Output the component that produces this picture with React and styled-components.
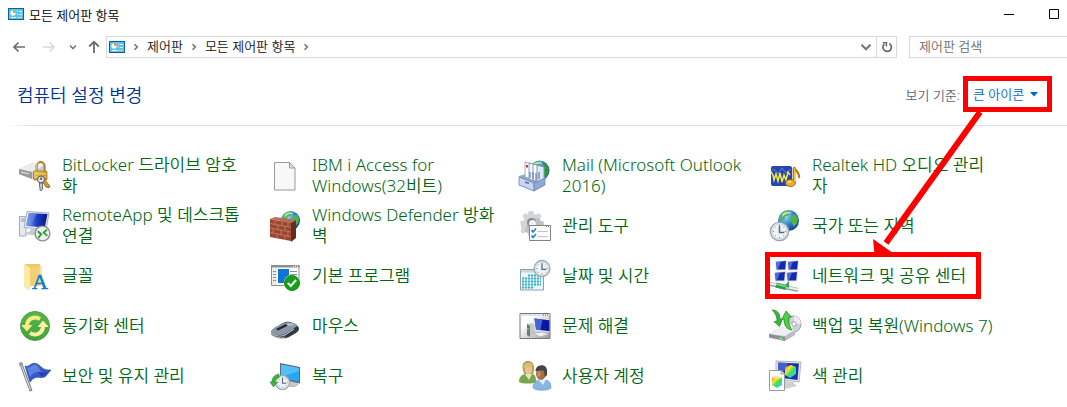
import React from "react";
import styled, { createGlobalStyle } from "styled-components";

const GlobalStyle = createGlobalStyle`
    *, *::before, *::after {
        box-sizing: border-box;
    }
    body {
        margin: 0;
        background: #fff;
        overflow: hidden;
        font-family: "Noto Sans", "Noto Sans CJK KR", sans-serif;
        font-size: 13px;
        color: #111;
    }
    button, input, select {
        font-family: inherit;
        font-size: inherit;
        color: inherit;
        border: 0;
        padding: 0;
        margin: 0;
        background: none;
    }
`;

/* ---------- small icons ---------- */

const PanelIcon = () => (
    <svg width="16" height="12" viewBox="0 0 16 12" aria-hidden="true">
        <rect width="16" height="12" fill="#0e6098" />
        <rect x="1" y="1" width="14" height="10" fill="#58c1f5" />
        <circle cx="5" cy="5" r="2.6" fill="#fff" />
        <path d="M5 5V2.2A2.8 2.8 0 0 1 7.8 5z" fill="#f09c1c" />
        <path d="M9 3h1M9 6h1M3 9.5h5" stroke="#fff" />
        <path d="M11 3.5h3M11 6.5h3" stroke="#e6f7ff" />
        <path d="M9 9.5h5" stroke="#f7d35c" />
    </svg>
);

const BackIcon = () => (
    <svg width="14" height="12" viewBox="0 0 14 12" aria-hidden="true">
        <path d="M13 6H2M6.5 1.500L2 6l4.500 4.500" fill="none" stroke="#6c6c6c" strokeWidth="1.700" />
    </svg>
);

const ForwardIcon = () => (
    <svg width="14" height="12" viewBox="0 0 14 12" aria-hidden="true">
        <path d="M1 6h11M7.500 1.500L12 6l-4.500 4.500" fill="none" stroke="#d9d9d9" strokeWidth="1.500" />
    </svg>
);

const UpIcon = () => (
    <svg width="12" height="14" viewBox="0 0 12 14" aria-hidden="true">
        <path d="M6 13V2M1.200 6.500L6 1.800l4.800 4.700" fill="none" stroke="#6c6c6c" strokeWidth="1.800" />
    </svg>
);

const DownIcon = ({ size = 8, weight = 1.6 }) => (
    <svg width={size} height={size} viewBox="0 0 8 8" aria-hidden="true">
        <path d="M1 2.500l3 3 3-3" fill="none" stroke="#777" strokeWidth={weight} />
    </svg>
);

const ChevronIcon = () => (
    <svg width="6" height="8" viewBox="0 0 6 8" aria-hidden="true">
        <path d="M1.500 1.200L4.300 4 1.500 6.800" fill="none" stroke="#777" strokeWidth="1.600" />
    </svg>
);

const RefreshIcon = () => (
    <svg width="12" height="12" viewBox="0 0 12 12" aria-hidden="true">
        <path d="M8.300 2.600A4.200 4.200 0 1 1 3.200 3.200" fill="none" stroke="#666" strokeWidth="1.700" />
        <path d="M1.800 1.700h3.600v3.700" fill="none" stroke="#666" strokeWidth="1.500" />
    </svg>
);

/* ---------- applet icons, all on a 32 grid ---------- */

const Globe = ({ cx, cy, r }) => (
    <g transform={`translate(${cx} ${cy}) scale(${r / 10})`}>
        <circle r="10" fill="url(#globe)" />
        <path d="M-7-6C-4-10 1-10 2-8L0-5l-3 1-1 3-4 1zM3-5l4-1 2 4-1 5-3 3-2-4-2-2zM-6 2l4 1 1 3-2 3C-6 7-7 5-6 2z" fill="#4fb548" />
        <path d="M-6-6C-4-9 2-9 3-7-1-7-4-6-6-3z" fill="#fff" opacity=".6" />
    </g>
);

const Clock = ({ cx, cy, r }) => (
    <g transform={`translate(${cx} ${cy}) scale(${r / 10})`}>
        <circle r="9.400" fill="#eef3f7" stroke="#9ba5ad" strokeWidth="1.500" />
        <circle r="7.600" fill="none" stroke="#c3ccd4" strokeWidth=".8" />
        <path d="M0-7v1.500M0 5.500V7M-7 0h1.500M5.500 0H7M-5-5l1 1M5-5l-1 1M-5 5l1-1M5 5L4 4" stroke="#8b949c" />
        <path d="M0-6V1h5" fill="none" stroke="#56687a" strokeWidth="1.500" />
    </g>
);

const ICONS = {
    bitlocker: (
        <>
            <path d="M0 10l13-6 11 3v8l-11 5L0 15z" fill="#c9cbce" />
            <path d="M0 10l13-6 11 3-11 6z" fill="#ececee" />
            <path d="M0 10l13 3v7L0 15z" fill="#96999d" />
            <path d="M2 13l8 2" stroke="#e8e8e8" />
            <path d="M17.500 14V7.500a4 4.500 0 0 1 8 0V14" fill="none" stroke="#a98a48" strokeWidth="2.400" />
            <path d="M17 13V7a4.500 5 0 0 1 3-4.500" fill="none" stroke="#e9d9a3" strokeWidth="1" />
            <rect x="14.500" y="12" width="13.500" height="9" rx="1" fill="url(#gold)" stroke="#9a6b13" strokeWidth=".7" />
            <path d="M15 15h12.500M15 18h12.500" stroke="#f8df8b" strokeWidth=".8" />
            <path d="M25 20l6 7-1 2-3-1-4-6z" fill="#c99a31" stroke="#7d5a12" strokeWidth=".7" />
            <circle cx="22" cy="20.500" r="3.500" fill="#e3e3e3" stroke="#555" strokeWidth="1" />
            <circle cx="22" cy="19.800" r="1.200" fill="#666" />
            <path d="M20.500 24h3v6l-1.500 2-1.500-2 1-1-1-1z" fill="#c4c4c4" stroke="#555" strokeWidth=".8" />
        </>
    ),
    remote: (
        <>
            <path d="M.5 7.500H7V27H.5z" fill="#e7ebf0" stroke="#a2abb5" />
            <path d="M2 10h4M2 12h4" stroke="#8c97a3" />
            <path d="M8 2.500l22 1.500-3 16.500-22-2z" fill="#eef1f5" stroke="#a4adb8" />
            <path d="M9.500 4L28.500 5l-2.700 13.500L6.800 17z" fill="url(#screen)" />
            <path d="M10 4l8 .5-7 12.500-4-.3z" fill="#6c8fe8" opacity=".55" />
            <path d="M12 19l7 1-1 3 3 4-17-2 7-3z" fill="#c6ccd4" />
            <circle cx="23.500" cy="24.500" r="7.400" fill="#ededed" stroke="#8b8f93" strokeWidth="1.400" />
            <path d="M18.800 22.200l3.500 3-3 3.600M28 20.600l-3.300 3 3.600 3.200" fill="none" stroke="#2e9b2e" strokeWidth="1.800" />
        </>
    ),
    fonts: (
        <>
            <path d="M6 5h15v22H10z" fill="#f2cf72" />
            <path d="M6 5h15v3H10z" fill="#e9c15a" opacity=".5" />
            <path d="M5 5l6 4v23l-6-4z" fill="#ffe9a8" />
            <path d="M19 7h4v20h-4z" fill="#f6d985" opacity=".7" />
            <text x="13" y="30" fontFamily="Liberation Serif, serif" fontSize="22" fontWeight="400" fill="#0c7dc6" stroke="#0c7dc6" strokeWidth=".6">A</text>
        </>
    ),
    sync: (
        <>
            <circle cx="16" cy="17" r="14.500" fill="url(#green)" stroke="#4f9c45" />
            <path d="M6 16A10 10 0 0 1 22 8.500l-2 3.200A6.300 6.300 0 0 0 10 16h3.500L8 22.500 2.200 16z" fill="#f8ec86" />
            <path d="M26 18A10 10 0 0 1 10 25.500l2-3.200A6.300 6.300 0 0 0 22 18h-3.500L24 11.500 29.800 18z" fill="#fdf2a1" />
        </>
    ),
    flag: (
        <>
            <path d="M6 7C10 9 12 3 17 4.500S23 12 32 11c-4 4-5 8-10 7.500S15 18 11 23z" fill="url(#blue)" stroke="#27479c" strokeWidth=".7" />
            <path d="M8 9c4 0 6-4 9-3s3 5 6 7c-5 0-8-1-12 5z" fill="#7ea2ec" opacity=".55" />
            <path d="M19 12c3 2 8 2 11 0-3 3-4 5-8 5z" fill="#1c2f9c" opacity=".6" />
            <path d="M2 5l10 27" stroke="#747981" strokeWidth="3" />
            <path d="M2 5l9.500 26" stroke="#d9dce0" strokeWidth="1.200" />
            <circle cx="2" cy="5" r="2" fill="#9b9fa5" />
        </>
    ),
    page: (
        <>
            <path d="M5.500 3.500h15l5.500 5.500v22H5.500z" fill="#f7f8f9" stroke="#9a9a9a" />
            <path d="M20.500 3.500V9H26z" fill="#dfe2e4" stroke="#9a9a9a" />
        </>
    ),
    firewall: (
        <>
            <Globe cx={21.500} cy={11.500} r={9.500} />
            <path d="M22 14l5-3v18l-5 4z" fill="#6c2a1c" />
            <path d="M1 10l21 4v18L1 28z" fill="#9c4531" />
            <path d="M1 10l5-2 21 3-5 3z" fill="#bb6c55" />
            <path d="M1 14.500l21 3.800M1 19l21 4M1 23.500l21 4.200M6 11v4.500M13 12v4.700M19 13.500v4.500M9 16v4.500M16 17.200V22M4 19.500V24M12 21v4.700M19 22.500v4.700M8 25v4.500M16 26.500V31" stroke="#c98d7a" strokeWidth=".7" />
        </>
    ),
    programs: (
        <>
            <path d="M2.500 6.500h27.500V26.500H2.500z" fill="#fff" stroke="#8d8d8d" />
            <path d="M2 6h28.500v2.500H2z" fill="#8d8d8d" />
            <path d="M24 7.200h1M26 7.200h1M28 7.200h1" stroke="#fff" />
            <path d="M3 9h5v17H3z" fill="#ececec" />
            <path d="M4 12.500h3M4 15.500h3M4 18.500h3M4 21.500h3M21 12.500h7M21 15.500h7" stroke="#8f8f8f" />
            <path d="M9 10h11v14H9z" fill="#0f76d8" />
            <circle cx="23" cy="24" r="8.300" fill="#fff" />
            <circle cx="23" cy="24" r="7.600" fill="#16a016" stroke="#0a7a0a" strokeWidth=".8" />
            <path d="M18.800 24l3 3 5.300-6" fill="none" stroke="#fff" strokeWidth="2" />
        </>
    ),
    mouse: (
        <>
            <path d="M2 24c0-3 6-7 12-10 4-2 7-1.500 10 0s6 3 6 6-5 5-9 7.500-8 2-13 .5S2 26 2 24z" fill="#34373c" />
            <path d="M2 23c0-3 6-6 12-8.500 4-2 7-1.500 10-.5 4 1 6 2.500 2 4.500L16 25c-4 2-14 1-14-2z" fill="#8997a8" />
            <path d="M2 24c3 3 10 4 14 2l9-6" fill="none" stroke="#d7dbe0" />
            <path d="M7 20l10-5 2 1.500-10 5z" fill="#23262b" />
            <path d="M17 15l5-1 4 2-7 1z" fill="#b5c1cf" />
            <path d="M4 27c4 2 8 3 12 1" fill="none" stroke="#b7bbc0" />
        </>
    ),
    recovery: (
        <>
            <ellipse cx="23" cy="25" rx="6" ry="2.500" fill="#c4cad0" stroke="#98a1aa" strokeWidth=".7" />
            <path d="M11 4l20 4v16.500l-20-5z" fill="#5f6a75" />
            <path d="M12 5.500L30 9v13.800L12 18.500z" fill="#27a7ef" />
            <path d="M12 5.500L30 9v3L12 18z" fill="#6ac8f9" opacity=".7" />
            <Clock cx={13.500} cy={23.500} r={7.500} />
            <path d="M10 15c-5 1-7 4-7 8H1l3.500 5 4-4.500H6c0-3 1-4.500 4-5z" fill="#3db43d" stroke="#26852a" strokeWidth=".6" />
        </>
    ),
    mail: (
        <>
            <Globe cx={20.500} cy={11.500} r={10} />
            <path d="M23 3c6 2 8 8 6 13l-3 4V8z" fill="#2f9440" />
            <path d="M0 17l7-2 16 4 3-2v8l-11 7L0 26z" fill="#93a9cf" />
            <path d="M6 3l8 2v16l-8-3z" fill="#fff" stroke="#8c9ab5" strokeWidth=".8" />
            <path d="M10 4l8 2v17l-8-3z" fill="#f4f7fc" stroke="#7a8bab" strokeWidth=".8" />
            <path d="M14 5l7 2v16l-7-2z" fill="#fff" stroke="#7a8bab" strokeWidth=".8" />
            <path d="M18 6l7 2v13l-7 2z" fill="#dce7f7" stroke="#6b7ea5" strokeWidth=".8" />
            <path d="M7 6h2v2.500H7z" fill="#e03020" />
            <path d="M11 13v6M14 13v7M17 14v7M20 13v7" stroke="#4d66a0" />
            <path d="M0 18l15 6v8L0 26z" fill="#c8d6ef" stroke="#6f87b6" strokeWidth=".8" />
            <path d="M15 24l11-5v7l-11 6z" fill="#8fa8d6" stroke="#6f87b6" strokeWidth=".8" />
            <path d="M6 23l4 1.500" stroke="#5d76aa" strokeWidth="1.600" />
        </>
    ),
    tools: (
        <>
            <path d="M10 2h4l.6 3 2.400 1 2.600-1.700L22.500 7l-1.700 2.600 1 2.400 3 .6v4l-3 .6-1 2.400L22 22l-3 3-2.500-2-2.400 1-.6 3h-4L9 24l-2.500-1L4 24.500 1.500 22 3 19.500 2 17l-.5-4.500 3-.6 1-2.400L3.500 7 6.500 4.300 9 6z" fill="#bcc1c5" />
            <path d="M10 2h4l.6 3 2.400 1 2.600-1.700L22.500 7l-1.700 2.600C12 6 8 14 6 22L4 24.500 1.500 22 3 19.500 2 17l-.5-4.500 3-.6 1-2.400L3.500 7 6.500 4.300 9 6z" fill="#d3d6d9" />
            <circle cx="12.500" cy="13.500" r="4.500" fill="#85898d" />
            <circle cx="13.500" cy="14.500" r="3.500" fill="#f2f2f2" />
            <path d="M10.500 16.500H31.500V31.500H10.500z" fill="#fafafa" stroke="#858585" />
            <path d="M27 17.500h1M29 17.500h1" stroke="#777" />
            <path d="M18.500 22.500h10M18.500 27.500h10" stroke="#c3c3c3" />
            <path d="M12.500 21l1.500 2 3-3.500M12.500 26.500l1.500 2 3-3.500" fill="none" stroke="#1a7fd2" strokeWidth="1.500" />
        </>
    ),
    date: (
        <>
            <path d="M1.500 10.500h23V31h-23z" fill="#edf5f8" stroke="#8da0aa" />
            <path d="M2 11h22v2.500H2z" fill="#c8d6dd" />
            <path d="M9 16.500h13M3 19.500h19M3 22.500h19M3 25.500h19M3 28.500h11" stroke="#36b0ca" strokeWidth="2" strokeDasharray="2.200 .8" />
            <Clock cx={23} cy={9.500} r={8.500} />
        </>
    ),
    trouble: (
        <>
            <path d="M1 4.500h30V29.500H1z" fill="url(#silver)" stroke="#777" />
            <path d="M1.500 5h29v2h-29z" fill="#dbe3ec" />
            <path d="M24 6h1M26 6h1M28 6h1" stroke="#55677d" />
            <path d="M8 15l5-1 3 2v9l-5 3-3-2z" fill="#c5c8cb" />
            <path d="M8 15l3 2v11l-3-2z" fill="#6f7478" />
            <path d="M9 19v2" stroke="#58dd58" strokeWidth="1.500" />
            <path d="M14 8.500l16.500 2v13L16 22z" fill="#e3e3e3" />
            <path d="M15.500 9.500l15 1.700v11L17 20.500z" fill="#0b18a6" />
            <path d="M15.500 9.500l8 1-2 10.400-4.500-.5z" fill="#5c83e8" opacity=".7" />
            <path d="M14 24l9-1 7 2-9 3z" fill="#eceff1" stroke="#9da2a7" strokeWidth=".6" />
        </>
    ),
    users: (
        <>
            <path d="M0 23c0-5 3-8 7-8h6c3 0 4 3 4 8-4 2-13 2-17 0z" fill="#77a84c" />
            <path d="M6 15l4 6 3-6z" fill="#dfe9c8" />
            <path d="M4 11C2 4 6 2 9 2s7 2 6 9l-1 4H5z" fill="#b59a50" />
            <ellipse cx="9.500" cy="10.500" rx="3.800" ry="5" fill="#eac299" />
            <path d="M4 9c0-6 9-8 10-2-3 2-6 1-10 2z" fill="#d4bf77" />
            <path d="M14 29c0-5 3-8 7-8h5c4 0 6 3 6 8-4 3-14 3-18 0z" fill="#8ab6e4" stroke="#5c8dc4" strokeWidth=".6" />
            <path d="M19 20l5 6 3-6z" fill="#e9f2fb" />
            <ellipse cx="22" cy="14.500" rx="5" ry="6.500" fill="#a66f45" />
            <path d="M16.500 12c0-7 11-8 11.500-1v5l-2 2-1-6c-3-1-5 0-8.500 0z" fill="#45444a" />
            <ellipse cx="20" cy="15" rx="1.500" ry="3" fill="#c99062" />
        </>
    ),
    realtek: (
        <>
            <rect x="2" y="7" width="21" height="20" rx="2" fill="#2745ab" />
            <path d="M2 13l3-3 4 5 4-6 4 5 5-4" fill="none" stroke="#7e95dd" strokeWidth=".7" />
            <path d="M2 13l2 3 1 5 2-6 2 7 2-8 2 9 2-7 2 5 2-8 2 3" fill="none" stroke="#efe846" strokeWidth="1.500" />
            <path d="M25 9v14" stroke="#8c5d0b" strokeWidth="2.600" />
            <path d="M25 8c1 4 6 5 5 11" fill="none" stroke="#b67d18" strokeWidth="2.200" />
            <ellipse cx="21.500" cy="24" rx="5" ry="3.600" fill="#eba92e" stroke="#8c5d0b" strokeWidth=".8" />
            <path d="M25.300 9v13" stroke="#ffc553" strokeWidth="1.200" />
            <ellipse cx="20.500" cy="23" rx="2" ry="1" fill="#ffe09a" />
        </>
    ),
    region: (
        <>
            <Globe cx={19.500} cy={11.500} r={10.500} />
            <Clock cx={10.500} cy={22.500} r={9.700} />
        </>
    ),
    network: (
        <>
            {[[6, 1], [18, 1], [5, 12], [17, 12]].map(([x, y]) => (
                <g key={`${x}-${y}`} transform={`translate(${x} ${y})`}>
                    <path d="M0 1l12-1-1 10.500H1z" fill="#dfe4ec" />
                    <path d="M1 2l10-1-.8 8.500H1.800z" fill="#152aa8" />
                    <path d="M1 2l5-.5-3 8H1.800z" fill="#6487e6" opacity=".7" />
                </g>
            ))}
            <path d="M1 25l28 6" stroke="#98a0a7" strokeWidth="4" />
            <path d="M1 24.500l28 6" stroke="#eef0f2" strokeWidth="2" />
            <path d="M7 26l10 2.500" stroke="#2f9d50" strokeWidth="5" />
            <path d="M15 27l5-5v7z" fill="#35a858" />
            <path d="M7 25l10 2.500" stroke="#7ddc95" strokeWidth="1.500" />
        </>
    ),
    backup: (
        <>
            <ellipse cx="25" cy="15" rx="7" ry="8" fill="#cfd2d5" stroke="#8b8f93" strokeWidth=".8" />
            <path d="M25 7c4 0 7 4 6.800 8L25 15z" fill="#f4e9f4" />
            <path d="M18 15a7 8 0 0 0 4 7l3-7z" fill="#eef5ee" />
            <circle cx="25" cy="15" r="2.200" fill="#fff" stroke="#8b8f93" strokeWidth=".8" />
            <path d="M0 25l11-7 15 3v5l-10 6L0 29z" fill="#b9bcc0" />
            <path d="M0 25l11-7 15 3-10 6z" fill="#eeeff0" />
            <path d="M0 25l16 3v4L0 28z" fill="#8b8f93" />
            <path d="M10 29l4 1" stroke="#6df06d" strokeWidth="1.500" />
            <path d="M3 1c5 0 8 3 8 9h2.500l-3 7.500L5 12.500l3-.5C8 8 7 5 3 1z" fill="#38b438" stroke="#1d7f23" strokeWidth=".7" />
            <path d="M23 21c-6-1-8-5-8-11h-2L17 2l5.500 6H20c-.5 5 0 9 3 13z" fill="#51cd4a" stroke="#1d7f23" strokeWidth=".7" />
        </>
    ),
    color: (
        <>
            <path d="M7 2l25 1-2 20L7 20z" fill="#e6e9ec" stroke="#9fa6ac" strokeWidth=".8" />
            <path d="M9 3.500l21 1-1.500 16.500L9 18.500z" fill="#1a31ae" />
            <path d="M9 3.500l10 .5-7 15-3-.5z" fill="#5e80df" opacity=".6" />
            <path d="M14 22l10 1 4 4-12 3z" fill="#cdd1d5" />
            <path d="M16 8l6-2 5 2v7l-6 4-5-3z" fill="url(#rainbow)" />
            <path d="M.5 11.500h11.500l3.500 3.500v16.500H.5z" fill="#fff" stroke="#9a9a9a" />
            <path d="M12 11.500V15h3.500" fill="#e3e3e3" stroke="#9a9a9a" />
            <path d="M3 19l5-2 5 2v7l-5 3-5-3z" fill="url(#rainbow)" />
            <path d="M3 19l5-2 5 2-5 2z" fill="#fff25c" opacity=".7" />
        </>
    )
};

const Gradients = () => (
    <Defs aria-hidden="true">
        <defs>
            <radialGradient id="globe" cx=".35" cy=".3" r=".8">
                <stop offset="0" stopColor="#9fdcff" />
                <stop offset=".5" stopColor="#2c83d8" />
                <stop offset="1" stopColor="#0e3192" />
            </radialGradient>
            <linearGradient id="gold" x2="1" y2="1">
                <stop offset="0" stopColor="#f3cf67" />
                <stop offset="1" stopColor="#b57d17" />
            </linearGradient>
            <linearGradient id="screen" x2="1">
                <stop offset="0" stopColor="#8fb3f5" />
                <stop offset=".5" stopColor="#1d3fc4" />
                <stop offset="1" stopColor="#0b128c" />
            </linearGradient>
            <linearGradient id="green" x2="0" y2="1">
                <stop offset="0" stopColor="#58b54c" />
                <stop offset="1" stopColor="#3fa53b" />
            </linearGradient>
            <linearGradient id="blue" x2="1" y2="1">
                <stop offset="0" stopColor="#3d65cf" />
                <stop offset="1" stopColor="#2a4ed0" />
            </linearGradient>
            <linearGradient id="silver" x2="1" y2="1">
                <stop offset=".3" stopColor="#fff" />
                <stop offset="1" stopColor="#9b9b9b" />
            </linearGradient>
            <linearGradient id="rainbow" x2="1" y2="1">
                <stop offset="0" stopColor="#ff3b3b" />
                <stop offset=".3" stopColor="#ffe23b" />
                <stop offset=".55" stopColor="#3be04c" />
                <stop offset=".8" stopColor="#38cdf5" />
                <stop offset="1" stopColor="#a448f0" />
            </linearGradient>
        </defs>
    </Defs>
);

const ITEMS = [
    { icon: "bitlocker", name: "BitLocker 드라이브 암호화" },
    { icon: "page", name: "IBM i Access for Windows(32비트)" },
    { icon: "mail", name: "Mail (Microsoft Outlook 2016)" },
    { icon: "realtek", name: "Realtek HD 오디오 관리자" },
    { icon: "remote", name: "RemoteApp 및 데스크톱 연결" },
    { icon: "firewall", name: "Windows Defender 방화벽" },
    { icon: "tools", name: "관리 도구" },
    { icon: "region", name: "국가 또는 지역" },
    { icon: "fonts", name: "글꼴" },
    { icon: "programs", name: "기본 프로그램" },
    { icon: "date", name: "날짜 및 시간" },
    { icon: "network", name: "네트워크 및 공유 센터", marked: true },
    { icon: "sync", name: "동기화 센터" },
    { icon: "mouse", name: "마우스" },
    { icon: "trouble", name: "문제 해결" },
    { icon: "backup", name: "백업 및 복원(Windows 7)" },
    { icon: "flag", name: "보안 및 유지 관리" },
    { icon: "recovery", name: "복구" },
    { icon: "users", name: "사용자 계정" },
    { icon: "color", name: "색 관리" }
];

const App = () => {
    return (
        <Window>
            <GlobalStyle />
            <Gradients />
            <TitleBar>
                <PanelIcon />
                <Title>모든 제어판 항목</Title>
                <WindowButton aria-label="최소화">
                    <svg width="10" height="10" aria-hidden="true"><path d="M0 5.500h10" stroke="#000" /></svg>
                </WindowButton>
                <WindowButton aria-label="최대화">
                    <svg width="10" height="10" aria-hidden="true"><path d="M.5.5h9v9h-9z" fill="none" stroke="#000" /></svg>
                </WindowButton>
            </TitleBar>
            <NavBar>
                <NavButton $width={30} aria-label="뒤로"><BackIcon /></NavButton>
                <NavButton $width={30} aria-label="앞으로" disabled><ForwardIcon /></NavButton>
                <NavButton $width={18} aria-label="최근 위치"><DownIcon /></NavButton>
                <NavButton $width={24} aria-label="위로"><UpIcon /></NavButton>
                <AddressBar>
                    <PanelIcon />
                    <Separator><ChevronIcon /></Separator>
                    <Crumb>제어판</Crumb>
                    <Separator><ChevronIcon /></Separator>
                    <Crumb>모든 제어판 항목</Crumb>
                    <Separator><ChevronIcon /></Separator>
                    <Spacer />
                    <NavButton $width={20} aria-label="이전 위치"><DownIcon size={12} weight={1.5} /></NavButton>
                    <RefreshButton aria-label="새로 고침"><RefreshIcon /></RefreshButton>
                </AddressBar>
                <Search type="search" aria-label="제어판 검색" placeholder="제어판 검색" />
            </NavBar>
            <Header>
                <Heading>컴퓨터 설정 변경</Heading>
                <ViewLabel htmlFor="view">보기 기준:</ViewLabel>
                <ViewBox>
                    <ViewSelect id="view" defaultValue="large">
                        <option value="large">큰 아이콘</option>
                    </ViewSelect>
                    <svg width="9" height="5" viewBox="0 0 9 5" aria-hidden="true"><path d="M0 0h8L4 4.500z" fill="#0066cc" /></svg>
                </ViewBox>
            </Header>
            <Rule />
            <Grid>
                {ITEMS.map((item) => (
                    <Item key={item.icon} $marked={item.marked}>
                        <svg width="32" height="32" viewBox="0 0 32 32" aria-hidden="true">{ICONS[item.icon]}</svg>
                        <ItemLink href="#">{item.name}</ItemLink>
                    </Item>
                ))}
            </Grid>
            <Arrow viewBox="0 0 114 148" aria-hidden="true">
                <path d="M110 3L16 134" stroke="#f00" strokeWidth="6" />
                <path d="M3 130l20 14-18 6z" fill="#f00" />
            </Arrow>
        </Window>
    );
};

export default App;

const Window = styled.main`
    position: relative;
    display: flex;
    flex-direction: column;
`;
const Defs = styled.svg`
    position: absolute;
    width: 0;
    height: 0;
`;
const TitleBar = styled.header`
    display: flex;
    align-items: center;
    height: 28px;
    padding: 0 8px;
`;
const Title = styled.span`
    flex: 1;
    padding-left: 5px;
    font-weight: 350;
    color: #000;
`;
const WindowButton = styled.button`
    display: flex;
    margin-left: 35px;
`;
const NavBar = styled.nav`
    display: flex;
    align-items: center;
    height: 38px;
    padding-left: 4px;
`;
const NavButton = styled.button`
    display: flex;
    align-items: center;
    justify-content: center;
    width: ${(p) => p.$width}px;
    height: 20px;
`;
const AddressBar = styled.div`
    display: flex;
    align-items: center;
    flex: 1;
    height: 22px;
    padding-left: 2px;
    border: 1px solid #d9d9d9;
`;
const Crumb = styled.button`
    font-weight: 350;
    line-height: 16px;
    padding-bottom: 2px;
`;
const Separator = styled.span`
    display: flex;
    justify-content: center;
    width: 22px;
`;
const Spacer = styled.div`
    flex: 1;
`;
const RefreshButton = styled.button`
    display: flex;
    align-items: center;
    justify-content: center;
    width: 20px;
    height: 20px;
    border-left: 1px solid #d9d9d9;
`;
const Search = styled.input`
    width: 158px;
    height: 22px;
    margin-left: 12px;
    padding: 0 0 2px 9px;
    border: 1px solid #d9d9d9;
    border-right: 0;
    font-weight: 350;
    &::placeholder {
        color: #6d6d6d;
        opacity: 1;
    }
`;
const Header = styled.div`
    display: flex;
    align-items: center;
    height: 56px;
    padding: 0 15px 0 17px;
`;
const Heading = styled.h1`
    flex: 1;
    margin: 0;
    font-size: 18px;
    font-weight: 350;
    color: #003399;
`;
const ViewLabel = styled.label`
    padding-right: 3px;
    font-weight: 350;
    color: #5a6779;
`;
const ViewBox = styled.div`
    display: flex;
    align-items: center;
    height: 36px;
    padding: 0 8px 0 5px;
    border: 5px solid #f00;
`;
const ViewSelect = styled.select`
    appearance: none;
    margin-right: 5px;
    font-weight: 350;
    color: #0066cc;
`;
const Rule = styled.hr`
    width: 100%;
    height: 1px;
    margin: 3px 0 24px;
    border: 0;
    background: linear-gradient(90deg, #fff 8px, #d5e2ec 30px);
`;
const Grid = styled.div`
    display: grid;
    grid-template-columns: repeat(auto-fill, 250px);
    grid-auto-rows: 50px;
    padding-left: 19px;
`;
const Item = styled.div`
    position: relative;
    display: flex;
    align-items: center;
    gap: 11px;
    padding-right: 24px;
    svg {
        flex: none;
        overflow: visible;
    }
    ${(p) => p.$marked && `
        &::after {
            content: "";
            position: absolute;
            top: 2px;
            left: -4px;
            width: 216px;
            height: 47px;
            border: 5px solid #f00;
            pointer-events: none;
        }
    `}
`;
const ItemLink = styled.a`
    font-size: 17px;
    font-weight: 350;
    line-height: 21px;
    color: #006612;
    text-decoration: none;
`;
const Arrow = styled.svg`
    position: absolute;
    top: 109px;
    left: 870px;
    width: 114px;
    height: 148px;
    pointer-events: none;
`;
